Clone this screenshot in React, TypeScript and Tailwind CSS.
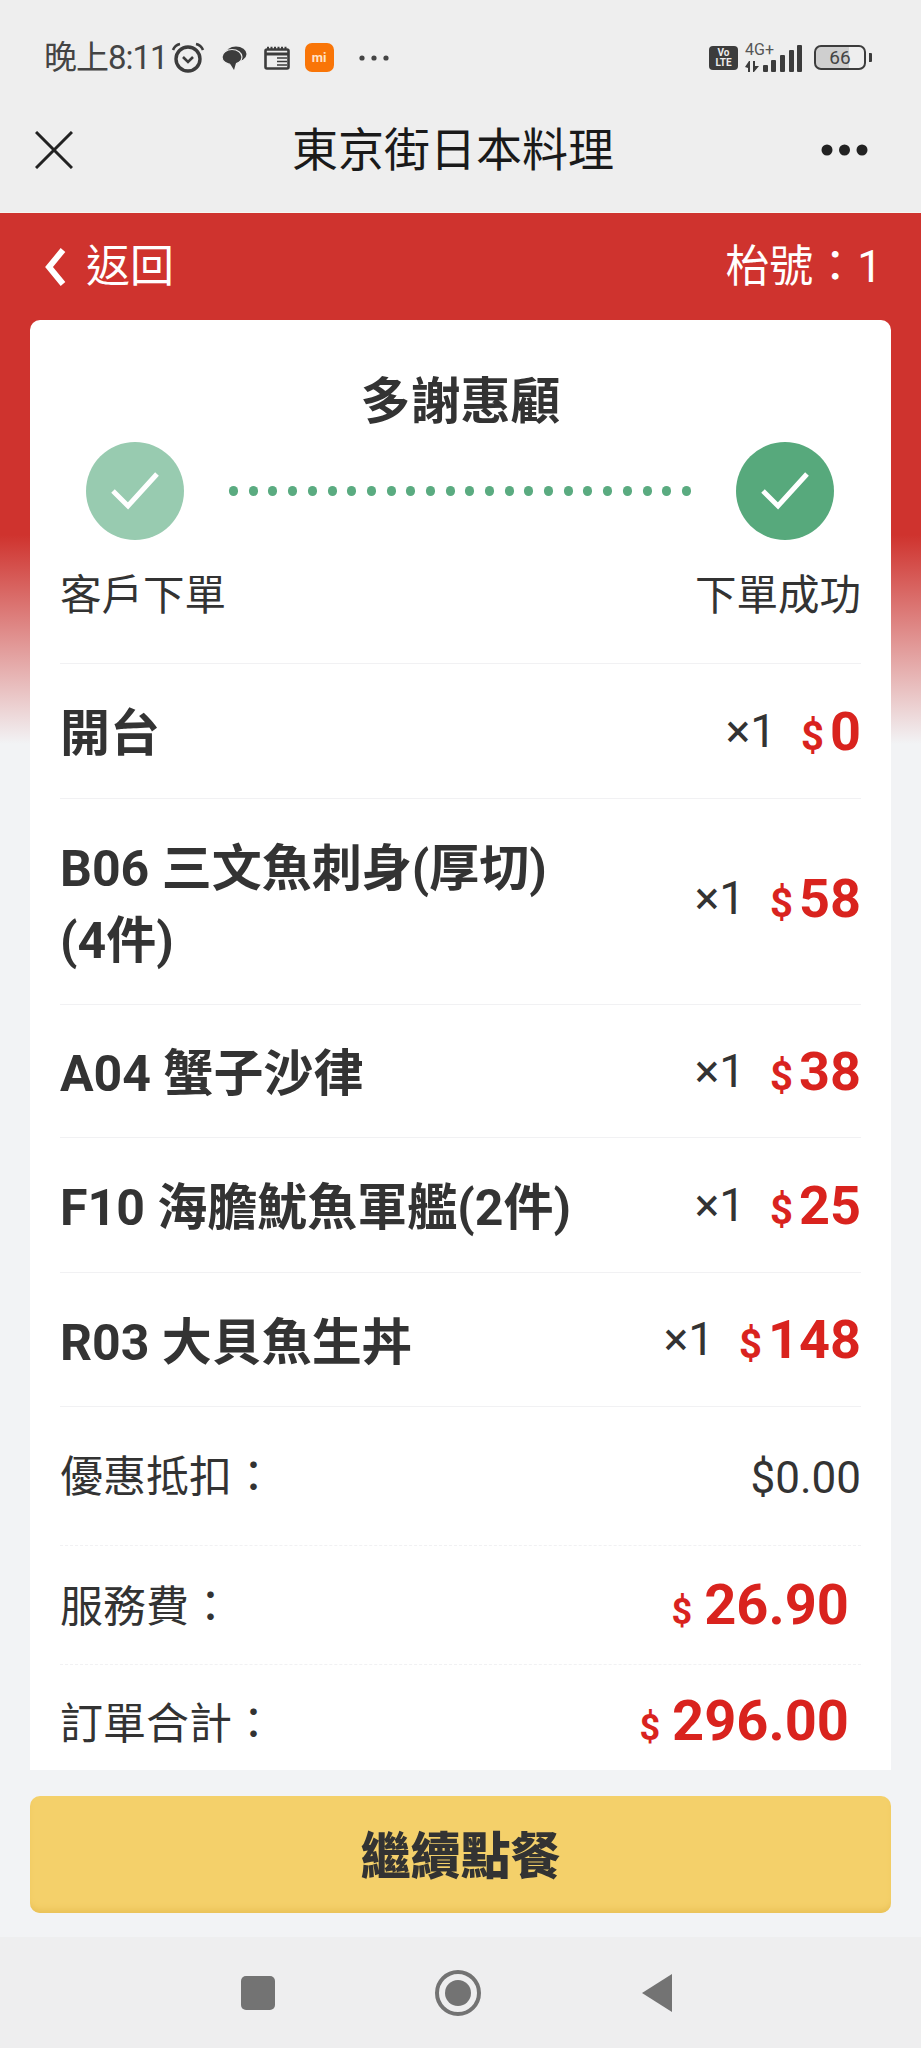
import React from 'react';

const items = [
  { lines: ['開台'], price: '0', height: 'h-[135px]', shift: 'mb-[4px]' },
  { lines: ['B06 三文魚刺身(厚切)', '(4件)'], price: '58', height: 'h-[206px]', shift: 'mb-[12px]' },
  { lines: ['A04 蟹子沙律'], price: '38', height: 'h-[133px]', shift: 'mb-[4px]' },
  { lines: ['F10 海膽魷魚軍艦(2件)'], price: '25', height: 'h-[135px]', shift: 'mb-[4px]' },
  { lines: ['R03 大貝魚生丼'], price: '148', height: 'h-[134px]', shift: 'mb-[6px]' },
];

function Check({ className }: { className: string }) {
  return (
    <div className={`w-[98px] h-[98px] rounded-full flex items-center justify-center ${className}`}>
      <svg width="50" height="40" viewBox="0 0 50 40" fill="none" stroke="white" strokeWidth="5">
        <path d="M3 20 L18 35 L47 3" />
      </svg>
    </div>
  );
}

function StatusBar() {
  return (
    <div className="h-[88px] pt-[27px] pl-[44px] pr-[49px] flex items-center text-[#444]">
      <span className="text-[33px] leading-none tracking-[-1px]">晚上8:11</span>
      <svg className="ml-[3px]" width="34" height="32" viewBox="0 0 34 32" fill="none" stroke="#3c3c3c">
        <circle cx="17" cy="17" r="12" strokeWidth="3.4" />
        <path d="M12 15 L17 20 L22 15" strokeWidth="2.6" />
        <path d="M2 8 Q4 3 9 2 M32 8 Q30 3 25 2" strokeWidth="2.6" />
      </svg>
      <svg className="ml-[16px]" width="26" height="26" viewBox="0 0 26 26" fill="#3c3c3c">
        <ellipse cx="15" cy="9" rx="10.5" ry="7.5" />
        <ellipse cx="11" cy="12" rx="10" ry="7.5" stroke="#ededed" strokeWidth="1.2" />
        <path d="M8 17 L15 18 L13 25 Z" />
      </svg>
      <svg className="ml-[17px]" width="26" height="24" viewBox="0 0 26 24" fill="none" stroke="#3c3c3c">
        <rect x="1.5" y="3.5" width="23" height="19" rx="1.5" strokeWidth="2.6" />
        <path d="M1 8 H25" strokeWidth="3" />
        <path d="M3 2 H23" strokeWidth="2.4" strokeDasharray="2 1.5" />
        <path d="M13 12 H23 M13 15.5 H23 M13 19 H23" strokeWidth="1.6" />
      </svg>
      <div className="ml-[15px] w-[29px] h-[29px] rounded-[7px] bg-[#f97507] text-[#ffe3c8] text-[13px] font-bold leading-none flex items-center justify-center">
        mi
      </div>
      <svg className="ml-[25px]" width="30" height="8" viewBox="0 0 30 8" fill="#444">
        <circle cx="3" cy="4" r="2.6" />
        <circle cx="15" cy="4" r="2.6" />
        <circle cx="27" cy="4" r="2.6" />
      </svg>
      <div className="ml-auto w-[29px] h-[24px] rounded-[4px] bg-[#3c3c3c] text-[#ededed] text-[10px] font-bold leading-[10px] text-center flex flex-col justify-center">
        <span>Vo</span>
        <span>LTE</span>
      </div>
      <div className="ml-[7px] w-[58px] h-[30px] flex flex-col justify-between relative">
        <span className="text-[16px] leading-[14px] text-[#555]">4G+</span>
        <svg className="absolute left-0 top-0" width="58" height="30" viewBox="0 0 58 30" fill="#3c3c3c">
          <path d="M0 24 L4 18 L5 18 V29 H3 V25 Z M8 18 H10 V23 L14 23 L9 29 H8 Z" />
          <rect x="18" y="22" width="5" height="7" rx="1" />
          <rect x="26" y="17" width="5" height="12" rx="1" />
          <rect x="35" y="12" width="5" height="17" rx="1" />
          <rect x="44" y="7" width="5" height="22" rx="1" />
          <rect x="52" y="2" width="5" height="27" rx="1" />
        </svg>
      </div>
      <div className="ml-[11px] w-[52px] h-[25px] border-[2.5px] border-[#3c3c3c] rounded-[7px] bg-[linear-gradient(90deg,#cfcfcf_68%,transparent_68%)] text-[19px] leading-none text-[#444] flex items-center justify-center">
        66
      </div>
      <div className="ml-[3px] w-[3px] h-[9px] bg-[#3c3c3c] rounded-r-[1px]" />
    </div>
  );
}

export default function App() {
  return (
    <div
      className="w-[921px] h-[2048px] flex flex-col overflow-hidden text-[#333]"
      style={{ fontFamily: 'Roboto, "Noto Sans CJK TC", sans-serif' }}
    >
      {/* Header */}
      <header className="bg-[#eeeeee] h-[213px] border-b border-[#f6f6f0]">
        <StatusBar />
        <div className="h-[124px] pb-[1px] pl-[35px] pr-[53px] flex items-center justify-between">
          <svg width="38" height="38" viewBox="0 0 38 38" stroke="#222" strokeWidth="3" fill="none">
            <path d="M1 1 L37 37 M37 1 L1 37" />
          </svg>
          <h1 className="ml-[12px] text-[46px] leading-none font-normal text-[#1a1a1a]">東京街日本料理</h1>
          <svg width="47" height="12" viewBox="0 0 47 12" fill="#222">
            <circle cx="6" cy="6" r="5.5" />
            <circle cx="23.5" cy="6" r="5.5" />
            <circle cx="41" cy="6" r="5.5" />
          </svg>
        </div>
      </header>

      {/* Main */}
      <main className="flex-1 flex flex-col px-[30px] bg-[linear-gradient(#cf332e_322px,#f2f3f5_531px)]">
        <div className="h-[107px] flex items-center justify-between text-white pl-[14px] pr-[9px]">
          <div className="flex items-center">
            <svg width="22" height="38" viewBox="0 0 22 38" fill="none" stroke="white" strokeWidth="6">
              <path d="M19 2 L5 19 L19 36" />
            </svg>
            <span className="ml-[20px] text-[44px] leading-none">返回</span>
          </div>
          <span className="text-[44px] leading-none">枱號：1</span>
        </div>

        <section className="h-[1450px] bg-white rounded-t-[10px] px-[30px] overflow-hidden">
          <h2 className="h-[122px] pt-[42px] flex items-center justify-center text-[50px] leading-none font-bold">多謝惠顧</h2>

          <div className="flex items-center justify-between pl-[26px] pr-[27px]">
            <Check className="bg-[#98cbb0]" />
            <div className="flex gap-[10.7px]">
              {Array.from({ length: 24 }).map((_, i) => (
                <span key={i} className="w-[9px] h-[10px] rounded-full bg-[#5aab80]" />
              ))}
            </div>
            <Check className="bg-[#57a97c]" />
          </div>

          <div className="h-[123px] pb-[11px] flex items-center justify-between text-[41.5px] leading-none">
            <span>客戶下單</span>
            <span>下單成功</span>
          </div>

          {items.map((item) => (
            <div
              key={item.price}
              className={`${item.height} pt-[6px] border-t border-[#f1f1f3] flex items-center justify-between`}
            >
              <div className="font-bold text-[50px] leading-[72px]">
                {item.lines.map((line) => (
                  <div key={line}>{line}</div>
                ))}
              </div>
              <div className={`flex items-baseline shrink-0 ${item.shift}`}>
                <span className="text-[46px] leading-none -translate-y-[3px]">×1</span>
                <span className="ml-[25px] text-[40px] leading-none font-bold text-[#d9231e]">$</span>
                <span className="ml-[6px] text-[54px] leading-none font-bold text-[#d9231e]">{item.price}</span>
              </div>
            </div>
          ))}

          <div className="h-[139px] pt-[3px] border-t border-[#f1f1f3] flex items-center justify-between text-[43px] leading-none">
            <span>優惠抵扣：</span>
            <span className="text-[44px]">$0.00</span>
          </div>
          <div className="h-[119px] border-t border-dashed border-[#f1f1f3] flex items-center justify-between text-[43px] leading-none">
            <span className="pt-[5px]">服務費：</span>
            <div className="flex items-baseline pr-[12px] text-[#d9231e] font-bold">
              <span className="text-[36px]">$</span>
              <span className="ml-[12px] text-[56px]">26.90</span>
            </div>
          </div>
          <div className="h-[106px] border-t border-dashed border-[#f1f1f3] flex items-center justify-between text-[43px] leading-none">
            <span className="pt-[14px]">訂單合計：</span>
            <div className="flex items-baseline pt-[6px] pr-[12px] text-[#d9231e] font-bold">
              <span className="text-[36px]">$</span>
              <span className="ml-[12px] text-[56px]">296.00</span>
            </div>
          </div>
        </section>

        <button className="mt-[26px] h-[117px] pt-[5px] rounded-[10px] bg-[#f4d06a] shadow-[inset_0_-6px_6px_-3px_#e8bf55] text-[50px] leading-none font-black text-[#333]">
          繼續點餐
        </button>
      </main>

      {/* Android nav */}
      <footer className="h-[111px] bg-[#eeeeef] flex items-center justify-center gap-[160px] pt-[1px] pr-[8px]">
        <div className="w-[34px] h-[34px] rounded-[5px] bg-[#737373]" />
        <div className="w-[46px] h-[46px] rounded-full border-[4px] border-[#737373] flex items-center justify-center">
          <div className="w-[26px] h-[26px] rounded-full bg-[#737373]" />
        </div>
        <svg width="32" height="40" viewBox="0 0 32 40" fill="#737373">
          <path d="M1 20 L31 1 V39 Z" />
        </svg>
      </footer>
    </div>
  );
}
